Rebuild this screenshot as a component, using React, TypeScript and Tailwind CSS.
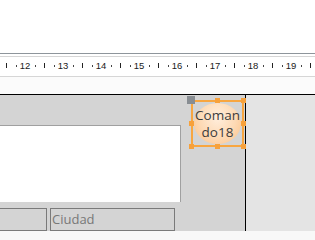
const CM = 38;
const FIRST = 12;

function Ruler() {
  const nums = [12, 13, 14, 15, 16, 17, 18, 19];
  const marks: { x: number; kind: 'tick' | 'dot' }[] = [];
  for (let i = -1; i < nums.length; i++) {
    const c = 25 + i * CM;
    marks.push({ x: c + CM * 0.25, kind: 'dot' });
    marks.push({ x: c + CM * 0.5, kind: 'tick' });
    marks.push({ x: c + CM * 0.75, kind: 'dot' });
  }
  return (
    <div className="relative h-[20px] bg-white border-b border-[#d6d6d6]">
      {marks.map((m, i) =>
        m.kind === 'tick' ? (
          <span
            key={i}
            className="absolute top-[6px] w-px h-[5px] bg-[#222]"
            style={{ left: Math.round(m.x) }}
          />
        ) : (
          <span
            key={i}
            className="absolute top-[8px] w-px h-[2px] bg-[#444]"
            style={{ left: Math.round(m.x) }}
          />
        )
      )}
      {nums.map((n) => (
        <span
          key={n}
          className="absolute top-[3px] w-[14px] -ml-[7px] text-center text-[9.5px] leading-[12px] text-[#1a1a1a]"
          style={{ left: 25 + (n - FIRST) * CM, fontFamily: '"Liberation Sans", sans-serif' }}
        >
          {n}
        </span>
      ))}
    </div>
  );
}

function Handle({ className }: { className: string }) {
  return <span className={`absolute w-[5px] h-[5px] bg-[#f7a13b] ${className}`} />;
}

export default function App() {
  return (
    <div
      className="w-[315px] h-[240px] overflow-hidden bg-[#fdfdfd] flex flex-col"
      style={{ fontFamily: '"Open Sans", "Noto Sans", sans-serif' }}
    >
      <div className="h-[54px] bg-white border-b border-[#8e959b]" />
      <div className="h-[3px] bg-white border-b border-[#d6d6d6]" />
      <Ruler />
      <div className="h-[17px] bg-[#fbfbfb]" />

      <div className="h-[137px] flex border-t border-black">
        <div className="relative w-[245px] bg-[#d4d4d4] flex flex-col">
          <div className="h-[30px]" />
          <div className="w-[181px] h-[77px] bg-white border-t border-r border-[#a0a0a0]" />
          <div className="flex gap-[3px] mt-[6px] -ml-[3px]">
            <div className="w-[50px] h-[23px] border border-[#7a7a7a]" />
            <div className="w-[125px] h-[23px] border border-[#7a7a7a] pl-[1px] text-[13px] leading-[20px] text-[#787878]">
              Ciudad
            </div>
          </div>

          <div className="absolute left-[191px] top-[5px] w-[53px] h-[47px] border-2 border-[#f8a640]">
            <div className="absolute inset-[1px] rounded-[50%] bg-[radial-gradient(ellipse_at_50%_35%,#ffeedd_0%,#fdd9b4_55%,#fbc187_100%)]" />
            <div className="relative h-full flex flex-col items-center justify-center text-[13.5px] leading-[17px] text-[#3c3c3c]">
              <span>Coman</span>
              <span>do18</span>
            </div>
            <Handle className="-left-[4px] -top-[4px]" />
            <Handle className="left-[22px] -top-[4px]" />
            <Handle className="-right-[4px] -top-[4px]" />
            <Handle className="-left-[4px] top-[19px]" />
            <Handle className="-right-[4px] top-[19px]" />
            <Handle className="-left-[4px] -bottom-[4px]" />
            <Handle className="left-[22px] -bottom-[4px]" />
            <Handle className="-right-[4px] -bottom-[4px]" />
          </div>
          <span className="absolute left-[187px] top-[1px] w-[8px] h-[8px] bg-[#888d92]" />
        </div>
        <div className="w-px bg-black" />
        <div className="flex-1 bg-[#e4e4e4]" />
      </div>
      <div className="flex-1 bg-[#f8f8f8]" />
    </div>
  );
}
